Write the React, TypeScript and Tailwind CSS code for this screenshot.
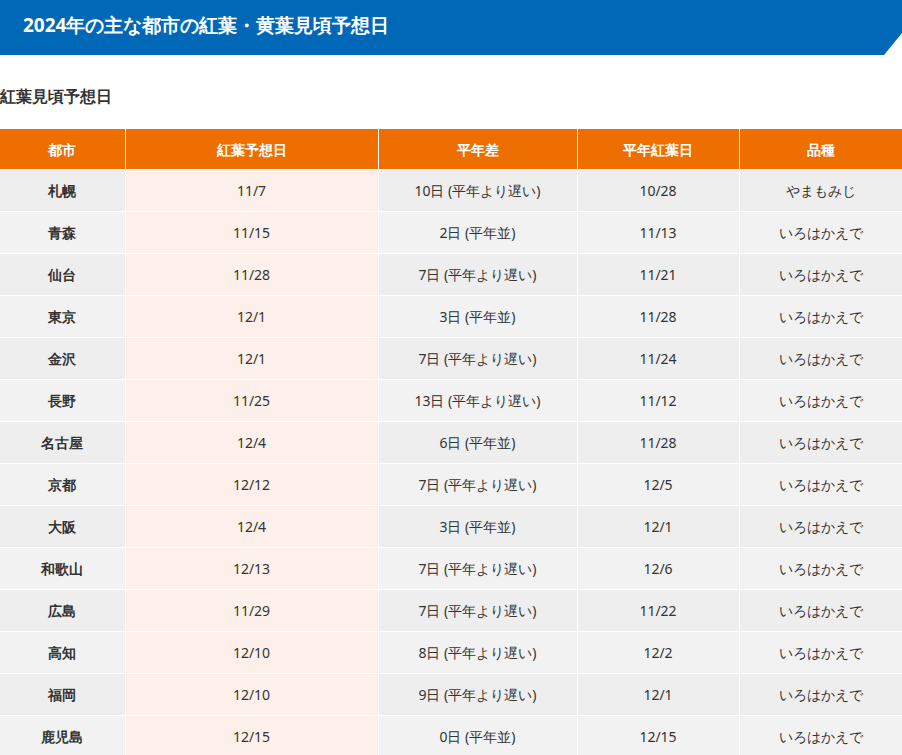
const rows = [
  ['札幌', '11/7', '10日 (平年より遅い)', '10/28', 'やまもみじ'],
  ['青森', '11/15', '2日 (平年並)', '11/13', 'いろはかえで'],
  ['仙台', '11/28', '7日 (平年より遅い)', '11/21', 'いろはかえで'],
  ['東京', '12/1', '3日 (平年並)', '11/28', 'いろはかえで'],
  ['金沢', '12/1', '7日 (平年より遅い)', '11/24', 'いろはかえで'],
  ['長野', '11/25', '13日 (平年より遅い)', '11/12', 'いろはかえで'],
  ['名古屋', '12/4', '6日 (平年並)', '11/28', 'いろはかえで'],
  ['京都', '12/12', '7日 (平年より遅い)', '12/5', 'いろはかえで'],
  ['大阪', '12/4', '3日 (平年並)', '12/1', 'いろはかえで'],
  ['和歌山', '12/13', '7日 (平年より遅い)', '12/6', 'いろはかえで'],
  ['広島', '11/29', '7日 (平年より遅い)', '11/22', 'いろはかえで'],
  ['高知', '12/10', '8日 (平年より遅い)', '12/2', 'いろはかえで'],
  ['福岡', '12/10', '9日 (平年より遅い)', '12/1', 'いろはかえで'],
  ['鹿児島', '12/15', '0日 (平年並)', '12/15', 'いろはかえで'],
]

const heads = ['都市', '紅葉予想日', '平年差', '平年紅葉日', '品種']
const widths = ['w-[125px]', 'w-[253px]', 'w-[199px]', 'w-[162px]', '']

export default function App() {
  return (
    <div className="min-h-screen bg-white font-['Noto_Sans_CJK_JP',sans-serif] text-[#333]">
      <div className="relative h-[55px] bg-[#0068b7]">
        <h1 className="pl-[23px] pt-[11px] text-[19px] font-bold text-white">2024年の主な都市の紅葉・黄葉見頃予想日</h1>
        <div className="absolute right-0 top-0 h-[55px] w-[18px] bg-white [clip-path:polygon(100%_60%,100%_100%,0_100%)]" />
      </div>
      <h2 className="mt-[29px] mb-[20px] text-[16px] font-bold leading-[24px]">紅葉見頃予想日</h2>
      <table className="w-full table-fixed border-collapse text-[14px]">
        <thead>
          <tr className="h-[41px] bg-[#ee6e00] text-white">
            {heads.map((h, i) => (
              <th key={h} className={`${widths[i]} border border-white font-bold first:border-l-0 last:border-r-0`}>{h}</th>
            ))}
          </tr>
        </thead>
        <tbody>
          {rows.map((r, ri) => (
            <tr key={r[0]} className={`h-[42px] ${ri % 2 === 0 ? 'bg-[#eeeeee]' : 'bg-[#f2f2f2]'}`}>
              {r.map((c, i) => (
                <td
                  key={i}
                  className={`border border-white text-center first:border-l-0 last:border-r-0 ${i === 0 ? 'font-bold' : ''} ${i === 1 ? 'bg-[#fdf0ea]' : ''}`}
                >
                  {c}
                </td>
              ))}
            </tr>
          ))}
        </tbody>
      </table>
    </div>
  )
}
